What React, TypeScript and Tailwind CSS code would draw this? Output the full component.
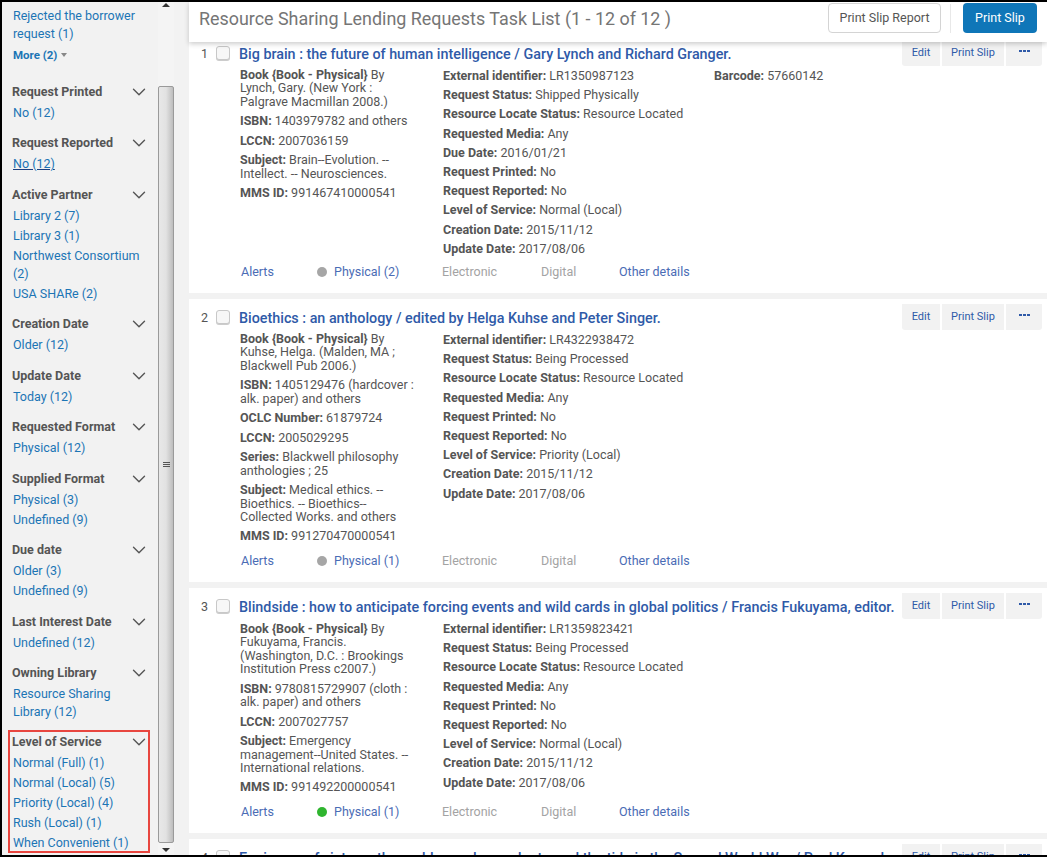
import { ChevronDown } from "lucide-react";

type Section = { title: string; items: string[]; underlined?: boolean; boxed?: boolean };

const SECTIONS: Section[] = [
  { title: "Request Printed", items: ["No (12)"] },
  { title: "Request Reported", items: ["No (12)"], underlined: true },
  { title: "Active Partner", items: ["Library 2 (7)", "Library 3 (1)", "Northwest Consortium (2)", "USA SHARe (2)"] },
  { title: "Creation Date", items: ["Older (12)"] },
  { title: "Update Date", items: ["Today (12)"] },
  { title: "Requested Format", items: ["Physical (12)"] },
  { title: "Supplied Format", items: ["Physical (3)", "Undefined (9)"] },
  { title: "Due date", items: ["Older (3)", "Undefined (9)"] },
  { title: "Last Interest Date", items: ["Undefined (12)"] },
  { title: "Owning Library", items: ["Resource Sharing Library (12)"] },
  {
    title: "Level of Service",
    items: ["Normal (Full) (1)", "Normal (Local) (5)", "Priority (Local) (4)", "Rush (Local) (1)", "When Convenient (1)"],
    boxed: true,
  },
];

type Field = [string, string];
type Rec = {
  n: number;
  title: string;
  book: string;
  left: Field[];
  mid: Field[];
  barcode?: string;
  physical: string;
  dot: string;
};

const RECORDS: Rec[] = [
  {
    n: 1,
    title: "Big brain : the future of human intelligence / Gary Lynch and Richard Granger.",
    book: "Lynch, Gary. (New York : Palgrave Macmillan 2008.)",
    left: [
      ["ISBN:", "1403979782 and others"],
      ["LCCN:", "2007036159"],
      ["Subject:", "Brain--Evolution. -- Intellect. -- Neurosciences."],
      ["MMS ID:", "991467410000541"],
    ],
    mid: [
      ["External identifier:", "LR1350987123"],
      ["Request Status:", "Shipped Physically"],
      ["Resource Locate Status:", "Resource Located"],
      ["Requested Media:", "Any"],
      ["Due Date:", "2016/01/21"],
      ["Request Printed:", "No"],
      ["Request Reported:", "No"],
      ["Level of Service:", "Normal (Local)"],
      ["Creation Date:", "2015/11/12"],
      ["Update Date:", "2017/08/06"],
    ],
    barcode: "57660142",
    physical: "Physical (2)",
    dot: "bg-[#a6a6a6]",
  },
  {
    n: 2,
    title: "Bioethics : an anthology / edited by Helga Kuhse and Peter Singer.",
    book: "Kuhse, Helga. (Malden, MA ; Blackwell Pub 2006.)",
    left: [
      ["ISBN:", "1405129476 (hardcover : alk. paper) and others"],
      ["OCLC Number:", "61879724"],
      ["LCCN:", "2005029295"],
      ["Series:", "Blackwell philosophy anthologies ; 25"],
      ["Subject:", "Medical ethics. -- Bioethics. -- Bioethics--Collected Works. and others"],
      ["MMS ID:", "991270470000541"],
    ],
    mid: [
      ["External identifier:", "LR4322938472"],
      ["Request Status:", "Being Processed"],
      ["Resource Locate Status:", "Resource Located"],
      ["Requested Media:", "Any"],
      ["Request Printed:", "No"],
      ["Request Reported:", "No"],
      ["Level of Service:", "Priority (Local)"],
      ["Creation Date:", "2015/11/12"],
      ["Update Date:", "2017/08/06"],
    ],
    physical: "Physical (1)",
    dot: "bg-[#a6a6a6]",
  },
  {
    n: 3,
    title: "Blindside : how to anticipate forcing events and wild cards in global politics / Francis Fukuyama, editor.",
    book: "Fukuyama, Francis. (Washington, D.C. : Brookings Institution Press c2007.)",
    left: [
      ["ISBN:", "9780815729907 (cloth : alk. paper) and others"],
      ["LCCN:", "2007027757"],
      ["Subject:", "Emergency management--United States. -- International relations."],
      ["MMS ID:", "991492200000541"],
    ],
    mid: [
      ["External identifier:", "LR1359823421"],
      ["Request Status:", "Being Processed"],
      ["Resource Locate Status:", "Resource Located"],
      ["Requested Media:", "Any"],
      ["Request Printed:", "No"],
      ["Request Reported:", "No"],
      ["Level of Service:", "Normal (Local)"],
      ["Creation Date:", "2015/11/12"],
      ["Update Date:", "2017/08/06"],
    ],
    physical: "Physical (1)",
    dot: "bg-[#2fb52f]",
  },
];

function FacetSection({ s }: { s: Section }) {
  return (
    <div
      className={
        s.boxed
          ? "-ml-[4px] -mt-[2px] h-[123px] border-2 border-[#e8463f] pl-[2px]"
          : "mb-[9.5px]"
      }
    >
      <div
        className={
          s.boxed
            ? "-mr-[2px] -mt-[1px] flex h-[22px] items-center justify-between font-bold text-[#555]"
            : "flex h-[22px] items-center justify-between font-bold text-[#555]"
        }
      >
        <span>{s.title}</span>
        <ChevronDown size={22} strokeWidth={1.5} className="text-[#555]" />
      </div>
      {s.items.map((it) => (
        <div key={it} className="py-px pl-px">
          <span className={s.underlined ? "text-[#1c75b5] underline decoration-[#1b3f80]" : "text-[#1c75b5]"}>{it}</span>
        </div>
      ))}
    </div>
  );
}

function Sidebar() {
  return (
    <div className="w-[156px] shrink-0 overflow-hidden bg-[#f2f2f2] pl-[10px] pr-[8px] pt-[4px] text-[12.5px] leading-[18px]">
      <div className="pl-px pt-px text-[#1c75b5]">Rejected the borrower request (1)</div>
      <div className="mt-[3px] flex h-[18px] items-center gap-1 pl-px text-[11.5px] font-bold text-[#1c75b5]">
        More (2)
        <span className="h-0 w-0 border-x-[3.5px] border-t-[4px] border-x-transparent border-t-[#888]" />
      </div>
      <div className="h-[16.8px]" />
      {SECTIONS.map((s) => (
        <FacetSection key={s.title} s={s} />
      ))}
    </div>
  );
}

function Scrollbar() {
  return (
    <div className="flex w-[31px] shrink-0 bg-[#f2f2f2]">
      <div className="flex w-[16px] flex-col items-center bg-[#f4f4f4]">
        <span className="mt-[1px] h-0 w-0 border-x-[4px] border-b-[4px] border-x-transparent border-b-[#333]" />
        <div className="mt-[79px] flex h-[757px] w-full items-center justify-center rounded-[2px] border border-[#9a9a9a] bg-gradient-to-r from-[#e8e8e8] via-[#e2e2e2] to-[#bdbdbd]">
          <div className="flex w-[7px] flex-col gap-px">
            <span className="h-px bg-[#555]" />
            <span className="h-px bg-[#555]" />
            <span className="h-px bg-[#555]" />
          </div>
        </div>
        <span className="mt-[5px] h-0 w-0 border-x-[4px] border-t-[4px] border-x-transparent border-t-[#333]" />
      </div>
    </div>
  );
}

function Label({ f }: { f: Field }) {
  return (
    <>
      <span className="font-bold text-[#555]">{f[0]}</span> {f[1]}
    </>
  );
}

function Actions() {
  return (
    <div className="flex gap-[2px] text-[11px] text-[#2f5aa8]">
      <div className="flex h-[26px] w-[38px] items-center justify-center rounded-bl-[3px] bg-[#f2f2f2] pt-px">Edit</div>
      <div className="flex h-[26px] w-[62px] items-center justify-center bg-[#f2f2f2] pt-px">Print Slip</div>
      <div className="flex h-[26px] w-[36px] items-center justify-center gap-px rounded-br-[3px] bg-[#f2f2f2] pb-[4px]">
        <span className="h-[2px] w-[3px] bg-[#2f5aa8]" />
        <span className="h-[2px] w-[3px] bg-[#2f5aa8]" />
        <span className="h-[2px] w-[3px] bg-[#2f5aa8]" />
      </div>
    </div>
  );
}

function TopRow({ n, title }: { n: number; title: string }) {
  return (
    <div className="flex h-[33px] items-start pt-[5px]">
      <span className="mt-[5px] w-[27px] shrink-0 pr-[8px] text-right text-[#555]">{n}</span>
      <span className="mt-[6px] h-[14px] w-[14px] shrink-0 rounded-[3px] border border-[#c8c8c8] bg-[#f7f7f7] shadow-[0_1px_0_#ccc]" />
      <div className="ml-[9px] min-w-0 flex-1 truncate pt-[4px] text-[14.33px] font-medium leading-[20px] text-[#2f5aa8]">
        {title}
      </div>
      <div className="ml-[2px] shrink-0">
        <Actions />
      </div>
    </div>
  );
}

function Card({ r }: { r: Rec }) {
  return (
    <div className="bg-white pb-[11px] pr-[5px] text-[12.5px] text-[#555]">
      <TopRow n={r.n} title={r.title} />
      <div className="flex pl-[51px]">
        <div className={r.n === 3 ? "w-[203px] shrink-0 pr-[28px] pt-px leading-[13.46px]" : "w-[203px] shrink-0 pr-[28px] leading-[13.46px]"}>
          <div className="mb-[6px]">
            <span className="font-bold">Book {"{Book - Physical}"}</span> By {r.book}
          </div>
          {r.left.map((f) => (
            <div key={f[0]} className="mb-[6px]">
              <Label f={f} />
            </div>
          ))}
        </div>
        <div className="w-[271px] shrink-0 leading-[19.2px]">
          {r.mid.map((f) => (
            <div key={f[0]} className="-mt-[2px] mb-[2px]">
              <Label f={f} />
            </div>
          ))}
        </div>
        <div className="-mt-[2px] leading-[19.2px]">
          {r.barcode && <Label f={["Barcode:", r.barcode]} />}
        </div>
      </div>
      <div className="mt-[2px] flex h-[20px] items-center pl-[52px] text-[#4a6cb5]">
        <span className="w-[76px]">Alerts</span>
        <span className={`mr-[7px] h-[10px] w-[10px] rounded-full ${r.dot}`} />
        <span className="w-[108px]">{r.physical}</span>
        <span className="w-[99px] text-[#a3a3a3]">Electronic</span>
        <span className="w-[78px] text-[#a3a3a3]">Digital</span>
        <span>Other details</span>
      </div>
    </div>
  );
}

export default function App() {
  return (
    <div
      className="flex h-[857px] w-[1047px] overflow-hidden border-b-2 border-l-2 border-t-2 border-black bg-[#f2f2f2]"
      style={{ fontFamily: "Roboto, 'Liberation Sans', sans-serif" }}
    >
      <Sidebar />
      <Scrollbar />
      <div className="relative flex min-w-0 flex-1 flex-col">
        <div className="relative z-10 flex h-[40px] shrink-0 items-start justify-between bg-white pl-[10px] pr-[10px] shadow-[0_2px_5px_rgba(0,0,0,0.2)]">
          <div className="pt-[6px] text-[17.9px] leading-[22px] text-[#757575]">
            Resource Sharing Lending Requests Task List (1 - 12 of 12 )
          </div>
          <div className="flex items-start pt-[1px] text-[12.5px]">
            <div className="flex h-[30px] w-[113px] items-center justify-center rounded-[4px] border border-[#d4d4d4] bg-white text-[#555]">
              Print Slip Report
            </div>
            <div className="mx-[9px] mt-[1px] h-[29px] w-px bg-[#e8e8e8]" />
            <div className="ml-[3px] flex h-[30px] w-[74px] items-center justify-center rounded-[4px] bg-[#0f76b8] text-white">
              Print Slip
            </div>
          </div>
        </div>
        <div className="-mt-[7px] flex flex-col gap-[6px]">
          {RECORDS.map((r) => (
            <Card key={r.n} r={r} />
          ))}
          <div className="h-[40px] bg-white pr-[5px] text-[12.5px] text-[#555]">
            <TopRow n={4} title="Engineers of victory : the problem solvers who turned the tide in the Second World War / Paul Kennedy." />
          </div>
        </div>
      </div>
    </div>
  );
}
